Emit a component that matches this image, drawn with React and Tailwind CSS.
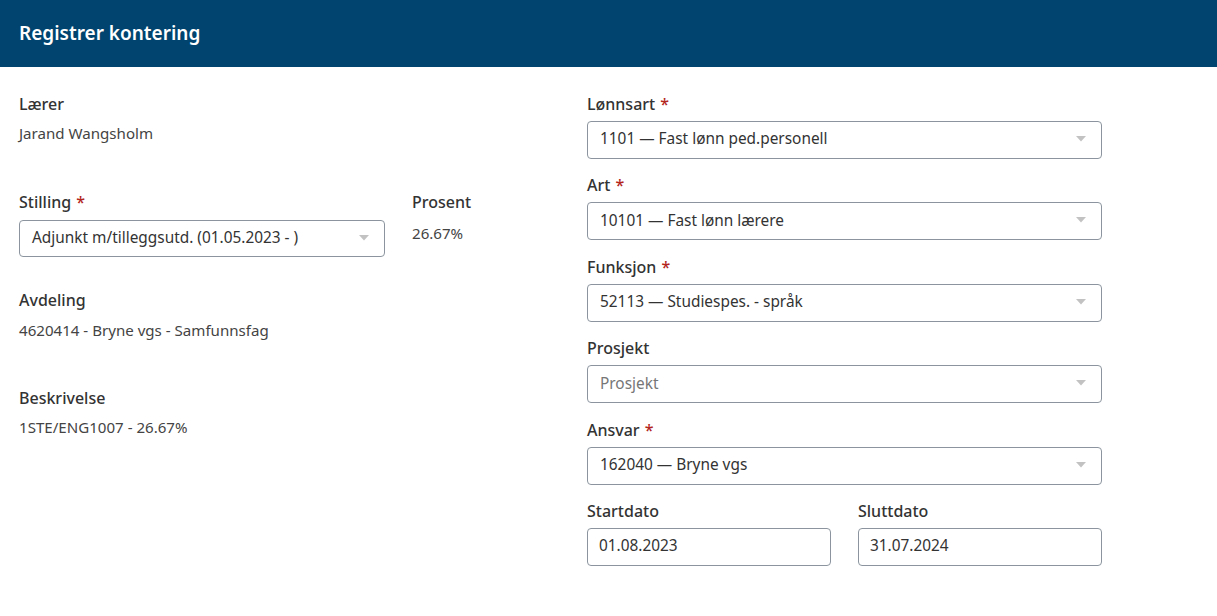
import React from 'react';

const font = { fontFamily: '"Noto Sans", "Open Sans", sans-serif' };

function Label({ children, required }) {
  return (
    <div className="text-[16px] leading-[24px] font-medium text-[#333333]">
      {children}
      {required && <span className="ml-[5px] text-[#b3261e]">*</span>}
    </div>
  );
}

function Value({ children, className = 'mt-[6px]' }) {
  return <div className={`${className} text-[15.1px] leading-[22px] text-[#444444]`}>{children}</div>;
}

function Chevron() {
  return (
    <svg width="10" height="6" viewBox="0 0 10 6" className="shrink-0">
      <path d="M0 0 L10 0 L5 5.5 Z" fill="#c2c2c2" />
    </svg>
  );
}

function Select({ value, placeholder }) {
  return (
    <div className="mt-[5px] flex h-[38px] items-center justify-between rounded-[4px] border border-[#8c959f] bg-white pb-[2px] pl-[12px] pr-[15px]">
      <span className={`text-[15.4px] ${value ? 'text-[#333333]' : 'text-[#767676]'}`}>
        {value || placeholder}
      </span>
      <Chevron />
    </div>
  );
}

function Input({ value }) {
  return (
    <div className="mt-[5px] flex h-[38px] items-center rounded-[4px] border border-[#8c959f] bg-white pb-[2px] pl-[11px]">
      <span className="text-[15.4px] text-[#333333]">{value}</span>
    </div>
  );
}

export default function App() {
  return (
    <div className="min-h-screen bg-white" style={font}>
      <header className="flex h-[67px] items-center bg-[#00446f] px-[19px]">
        <h1 className="text-[19px] font-semibold text-white">Registrer kontering</h1>
      </header>

      <div className="flex px-[19px] pt-[25px]">
        {/* Venstre kolonne */}
        <div className="w-[568px]">
          <div className="h-[98px]">
            <Label>Lærer</Label>
            <Value>Jarand Wangsholm</Value>
          </div>
          <div className="flex h-[98px] gap-[27px]">
            <div className="w-[366px]">
              <Label required>Stilling</Label>
              <div className="mt-[6px] flex h-[37px] items-center justify-between rounded-[4px] border border-[#8c959f] bg-white pb-[2px] pl-[12px] pr-[15px]">
                <span className="text-[15.4px] text-[#333333]">Adjunkt m/tilleggsutd. (01.05.2023 - )</span>
                <Chevron />
              </div>
            </div>
            <div>
              <Label>Prosent</Label>
              <Value className="mt-[8px]">26.67%</Value>
            </div>
          </div>
          <div className="h-[98px]">
            <Label>Avdeling</Label>
            <Value className="mt-[7px]">4620414 - Bryne vgs - Samfunnsfag</Value>
          </div>
          <div className="h-[98px]">
            <Label>Beskrivelse</Label>
            <Value>1STE/ENG1007 - 26.67%</Value>
          </div>
        </div>

        {/* Høyre kolonne */}
        <div className="flex w-[515px] flex-col gap-[14.4px]">
          <div>
            <Label required>Lønnsart</Label>
            <Select value="1101 — Fast lønn ped.personell" />
          </div>
          <div>
            <Label required>Art</Label>
            <Select value="10101 — Fast lønn lærere" />
          </div>
          <div>
            <Label required>Funksjon</Label>
            <Select value="52113 — Studiespes. - språk" />
          </div>
          <div>
            <Label>Prosjekt</Label>
            <Select placeholder="Prosjekt" />
          </div>
          <div>
            <Label required>Ansvar</Label>
            <Select value="162040 — Bryne vgs" />
          </div>
          <div className="flex gap-[27px]">
            <div className="flex-1">
              <Label>Startdato</Label>
              <Input value="01.08.2023" />
            </div>
            <div className="flex-1">
              <Label>Sluttdato</Label>
              <Input value="31.07.2024" />
            </div>
          </div>
        </div>
      </div>
    </div>
  );
}
